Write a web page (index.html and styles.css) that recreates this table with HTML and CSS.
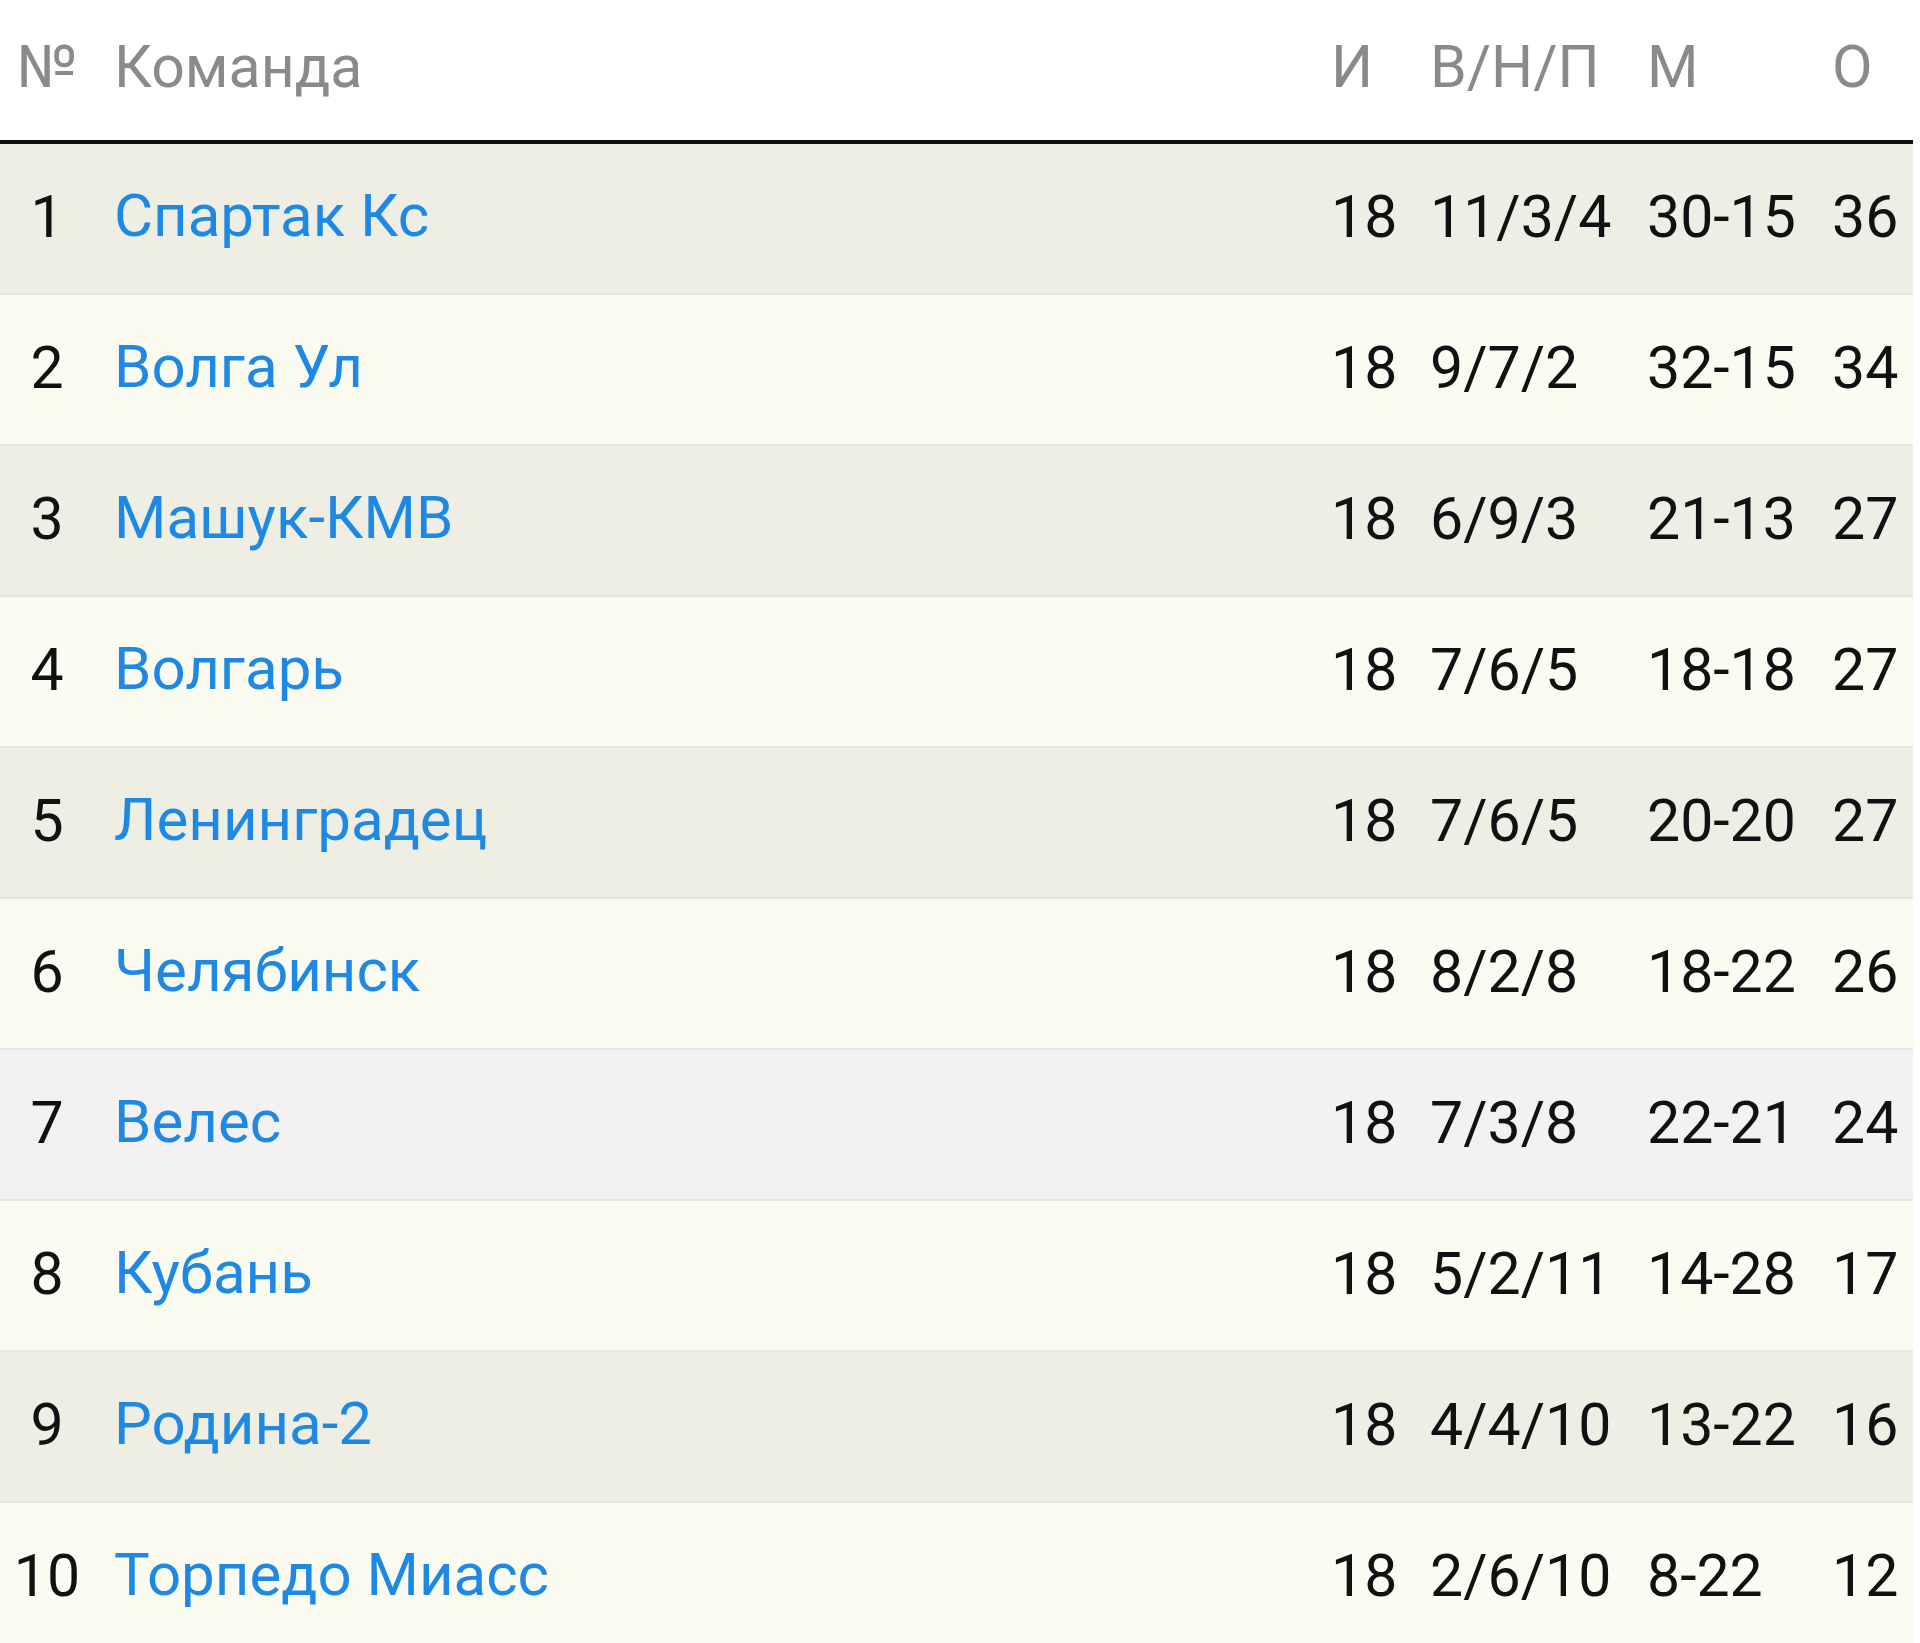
FILE: index.html
```html
<!DOCTYPE html>
<html lang="ru">
<head>
<meta charset="utf-8">
<title>Таблица</title>
<link rel="stylesheet" href="styles.css">
</head>
<body>
<div class="table">
  <div class="row head">
    <div class="c no">№</div>
    <div class="c team">Команда</div>
    <div class="c">И</div>
    <div class="c">В/Н/П</div>
    <div class="c">М</div>
    <div class="c">О</div>
  </div>
  <div class="row odd"><div class="c no">1</div><div class="c team"><a>Спартак Кс</a></div><div class="c">18</div><div class="c">11/3/4</div><div class="c">30-15</div><div class="c">36</div></div>
  <div class="row even"><div class="c no">2</div><div class="c team"><a>Волга Ул</a></div><div class="c">18</div><div class="c">9/7/2</div><div class="c">32-15</div><div class="c">34</div></div>
  <div class="row odd"><div class="c no">3</div><div class="c team"><a>Машук-КМВ</a></div><div class="c">18</div><div class="c">6/9/3</div><div class="c">21-13</div><div class="c">27</div></div>
  <div class="row even"><div class="c no">4</div><div class="c team"><a>Волгарь</a></div><div class="c">18</div><div class="c">7/6/5</div><div class="c">18-18</div><div class="c">27</div></div>
  <div class="row odd"><div class="c no">5</div><div class="c team"><a>Ленинградец</a></div><div class="c">18</div><div class="c">7/6/5</div><div class="c">20-20</div><div class="c">27</div></div>
  <div class="row even"><div class="c no">6</div><div class="c team"><a>Челябинск</a></div><div class="c">18</div><div class="c">8/2/8</div><div class="c">18-22</div><div class="c">26</div></div>
  <div class="row pink"><div class="c no">7</div><div class="c team"><a>Велес</a></div><div class="c">18</div><div class="c">7/3/8</div><div class="c">22-21</div><div class="c">24</div></div>
  <div class="row even"><div class="c no">8</div><div class="c team"><a>Кубань</a></div><div class="c">18</div><div class="c">5/2/11</div><div class="c">14-28</div><div class="c">17</div></div>
  <div class="row odd"><div class="c no">9</div><div class="c team"><a>Родина-2</a></div><div class="c">18</div><div class="c">4/4/10</div><div class="c">13-22</div><div class="c">16</div></div>
  <div class="row even"><div class="c no">10</div><div class="c team"><a>Торпедо Миасс</a></div><div class="c">18</div><div class="c">2/6/10</div><div class="c">8-22</div><div class="c">12</div></div>
</div>
</body>
</html>
```
FILE: styles.css
```css
html, body {
  margin: 0;
  padding: 0;
  background: #ffffff;
}
body {
  font-family: Roboto, "Noto Sans", "Liberation Sans", sans-serif;
  color: #111111;
  overflow: hidden;
}
.table {
  width: 1913px;
}
.row {
  display: grid;
  grid-template-columns: 94px 1237px 99px 217px 185px 81px;
  align-items: center;
  height: 151px;
  padding-bottom: 5px;
  font-size: 59px;
  box-sizing: border-box;
}
.row.head {
  height: 144px;
  padding-bottom: 8px;
  border-bottom: 4px solid #111111;
  font-size: 59px;
  color: #8a8a8a;
  background: #ffffff;
}
.c {
  white-space: nowrap;
  line-height: 1;
}
.no {
  text-align: center;
}
.team {
  padding-left: 20px;
}
.team a {
  color: #1e88e5;
  font-size: 60px;
}
.odd {
  background: #efeee5;
  border-bottom: 2px solid #e5e5dd;
}
.even {
  background: #fbfbf1;
  border-bottom: 2px solid #e8e8e1;
}
.pink {
  background: #f4f1f3;
  border-bottom: 2px solid #e7e5e6;
}
```
